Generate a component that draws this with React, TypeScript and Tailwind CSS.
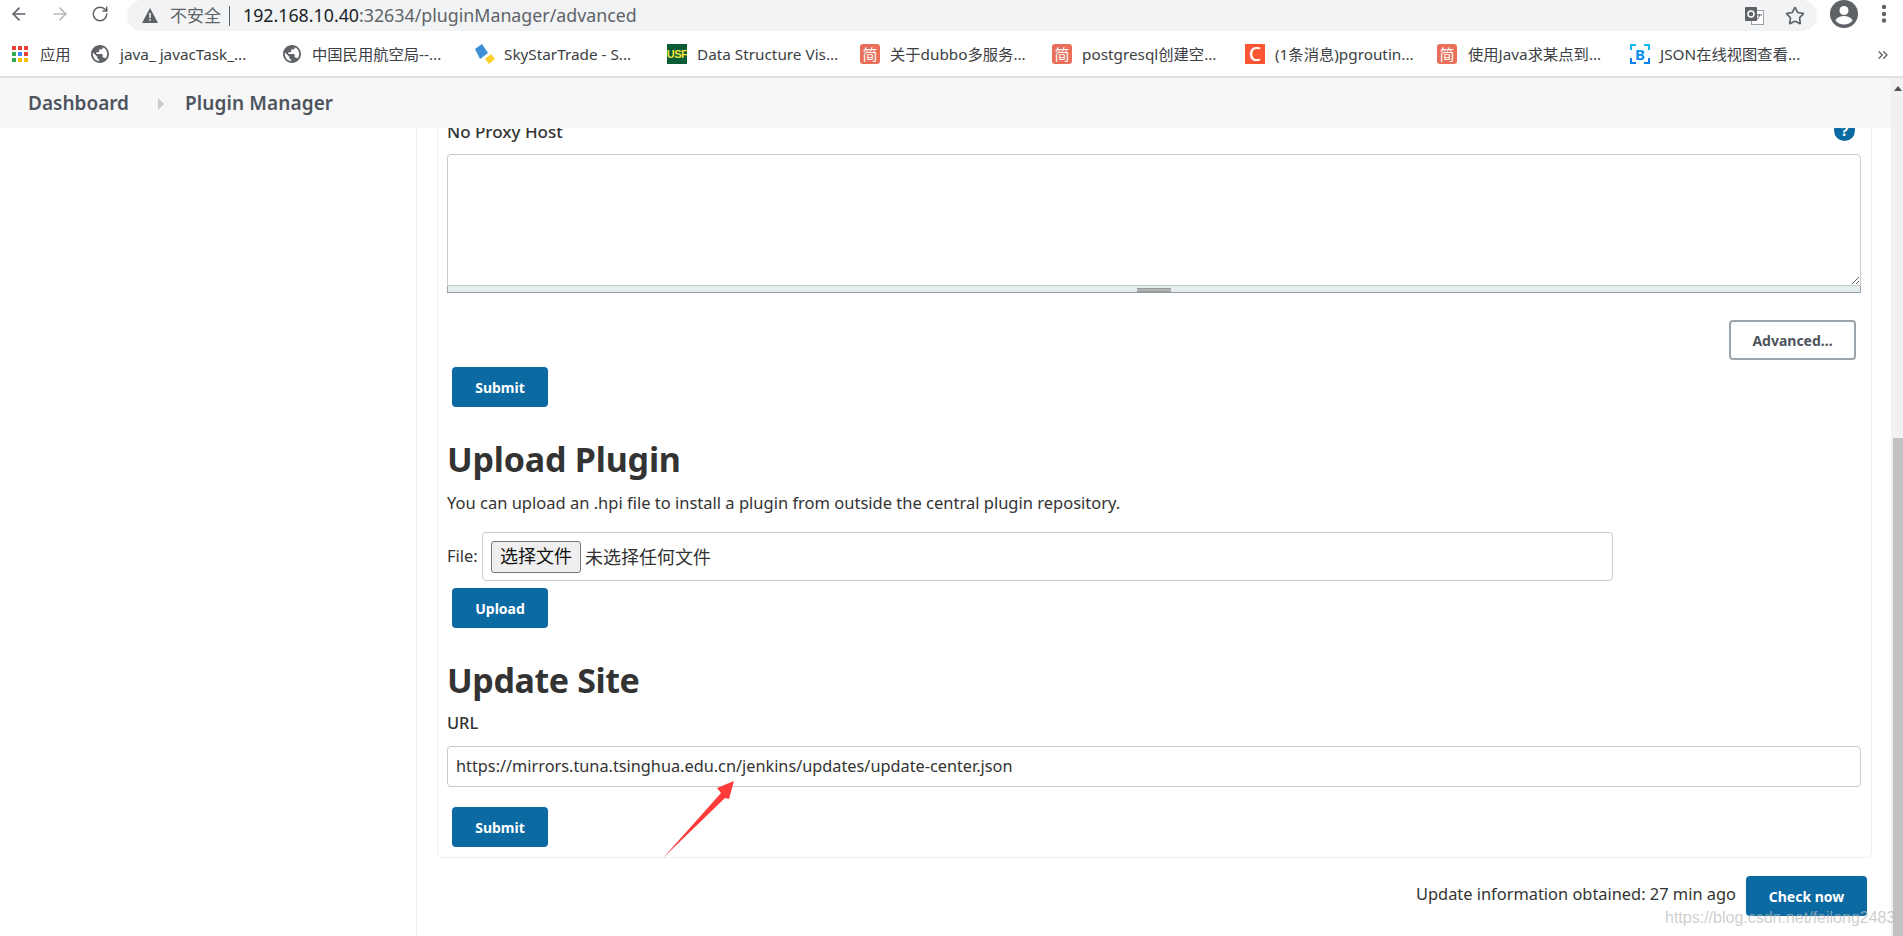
import React from "react";
import { ArrowLeft, ArrowRight, RotateCw, Star, ChevronsRight } from "lucide-react";

const FONT = "font-['Noto_Sans','Noto_Sans_CJK_SC',sans-serif]";

function Globe() {
  return (
    <svg width="18" height="18" viewBox="2 2 20 20" className="shrink-0">
      <path
        d="M12 2C6.48 2 2 6.48 2 12s4.48 10 10 10 10-4.48 10-10S17.52 2 12 2zm-1 17.93c-3.95-.49-7-3.85-7-7.93 0-.62.08-1.21.21-1.79L9 15v1c0 1.1.9 2 2 2v1.93zm6.9-2.54c-.26-.81-1-1.39-1.9-1.39h-1v-3c0-.55-.45-1-1-1H8v-2h2c.55 0 1-.45 1-1V7h2c1.1 0 2-.9 2-2v-.41c2.93 1.19 5 4.06 5 7.41 0 2.08-.8 3.97-2.1 5.39z"
        fill="#5f6368"
      />
    </svg>
  );
}

function Apps() {
  const colors = ["#ea4335", "#ea4335", "#ea4335", "#34a853", "#4285f4", "#ea4335", "#34a853", "#fbbc04", "#fbbc04"];
  return (
    <div className="grid w-[16px] shrink-0 grid-cols-3 gap-[2px]">
      {colors.map((c, i) => (
        <span key={i} className="h-1 w-1" style={{ background: c }} />
      ))}
    </div>
  );
}

function Jian() {
  return (
    <span className="flex h-5 w-5 shrink-0 items-center justify-center rounded-[3px] bg-[#ea6f5a] text-[15px] leading-none text-white">
      简
    </span>
  );
}

function Sky() {
  return (
    <svg width="21" height="21" viewBox="0 0 21 21" className="shrink-0">
      <path d="M0 5L7 0l6 9-8 6z" fill="#3f8fd8" />
      <path d="M10 15l6-5 4 5-6 5z" fill="#fbd02c" />
    </svg>
  );
}

function Usf() {
  return (
    <span className="flex h-5 w-5 shrink-0 items-center justify-center bg-[#0a5c36] font-['Liberation_Sans'] text-[11px] font-bold leading-none tracking-[-0.5px] text-[#f5e33c]">
      USF
    </span>
  );
}

function Csdn() {
  return (
    <span className="flex h-5 w-5 shrink-0 items-center justify-center bg-[#fc5531] text-[19px] font-medium leading-none text-white">
      C
    </span>
  );
}

function BJson() {
  return (
    <span className="relative flex h-5 w-5 shrink-0 items-center justify-center text-[15px] font-bold leading-none text-[#0a8ff0]">
      <svg width="20" height="20" viewBox="0 0 20 20" className="absolute inset-0">
        <path d="M6 1H1v5M14 1h5v5" fill="none" stroke="#12b5f5" strokeWidth="2" />
        <path d="M1 14v5h5M19 14v5h-5" fill="none" stroke="#0a7ff0" strokeWidth="2" />
      </svg>
      B
    </span>
  );
}

// left is the gap back to the previous bookmark
const bookmarks = [
  { icon: <Apps />, label: "应用", left: 12, gap: 12, width: 30 },
  { icon: <Globe />, label: "java_ javacTask_...", left: 21, gap: 11, width: 125 },
  { icon: <Globe />, label: "中国民用航空局--...", left: 38, gap: 11, width: 130 },
  { icon: <Sky />, label: "SkyStarTrade - S...", left: 33, gap: 8, width: 130 },
  { icon: <Usf />, label: "Data Structure Vis...", left: 33, gap: 10, width: 141 },
  { icon: <Jian />, label: "关于dubbo多服务...", left: 22, gap: 10, width: 134 },
  { icon: <Jian />, label: "postgresql创建空...", left: 28, gap: 10, width: 133 },
  { icon: <Csdn />, label: "(1条消息)pgroutin...", left: 30, gap: 10, width: 142 },
  { icon: <Jian />, label: "使用Java求某点到...", left: 20, gap: 11, width: 131 },
  { icon: <BJson />, label: "JSON在线视图查看...", left: 31, gap: 10, width: 140 },
];

function BlueButton({ label, className = "" }: { label: string; className?: string }) {
  return (
    <button className={`h-10 rounded bg-[#0b6aa2] text-[14px] font-bold text-white ${className}`}>{label}</button>
  );
}

export default function App() {
  return (
    <div className={`relative flex h-[936px] w-full flex-col overflow-hidden bg-white ${FONT}`}>
      {/* Browser toolbar */}
      <div className="flex h-[31px] shrink-0 items-start bg-white pl-[9px] text-[#5f6368]">
        <ArrowLeft size={20} strokeWidth={2} className="mt-[4px]" />
        <ArrowRight size={20} strokeWidth={2} className="ml-[21px] mt-[4px] text-[#b5b8bb]" />
        <RotateCw size={18} strokeWidth={2} className="ml-[21px] mt-[5px]" />
        <div className="ml-[18px] flex h-[31px] w-[1690px] items-center rounded-[16px] bg-[#f1f3f4] pl-[15px]">
          <svg width="16" height="15" viewBox="0 0 16 15" className="shrink-0">
            <path d="M8 0l8 15H0z" fill="#5f6368" />
            <path d="M7.200 5h1.600v5H7.200zM7.200 11h1.600v1.600H7.200z" fill="#f1f3f4" />
          </svg>
          <span className="ml-[12px] text-[17px] text-[#5f6368]">不安全</span>
          <span className="ml-[8px] h-[20px] w-px bg-[#5f6368]" />
          <span className="ml-[13px] whitespace-nowrap text-[17.8px] text-[#202124]">
            192.168.10.40<span className="text-[#5f6368]">:32634/pluginManager/advanced</span>
          </span>
          <div className="ml-auto flex items-center gap-[21px] pr-[12px]">
            <svg width="19" height="18" viewBox="0 0 19 18">
              <rect x="6.500" y="3.500" width="12" height="14" fill="#fff" stroke="#9aa0a6" />
              <rect x="0" y="0" width="12" height="14" rx="1" fill="#5f6368" />
              <circle cx="6" cy="7" r="3" fill="none" stroke="#fff" strokeWidth="1.500" />
              <path d="M12 8h5M14.500 7v1q-.5 3-3 5" fill="none" stroke="#5f6368" />
            </svg>
            <Star size={20} strokeWidth={2} />
          </div>
        </div>
        <svg width="28" height="28" viewBox="0 0 28 28" className="ml-[13px] shrink-0">
          <circle cx="14" cy="14" r="14" fill="#5f6368" />
          <circle cx="14" cy="10.500" r="4.500" fill="#fff" />
          <path d="M5.500 20.500c2-3.500 5-4.500 8.500-4.500s6.500 1 8.500 4.500c-2 2.500-5 4-8.500 4s-6.500-1.500-8.500-4z" fill="#fff" />
        </svg>
        <svg width="6" height="28" viewBox="0 0 6 28" className="ml-[23px] shrink-0">
          <circle cx="3" cy="7" r="2.200" fill="#5f6368" />
          <circle cx="3" cy="14" r="2.200" fill="#5f6368" />
          <circle cx="3" cy="20.500" r="2.200" fill="#5f6368" />
        </svg>
      </div>

      {/* Bookmarks */}
      <div className="relative flex h-[47px] shrink-0 items-center border-b-2 border-[#dfdfe6] bg-white pt-[1px] text-[15.3px] text-[#3c4043]">
        {bookmarks.map((b) => (
          <div key={b.label} className="flex shrink-0 items-center" style={{ marginLeft: b.left, gap: b.gap }}>
            {b.icon}
            <span className="whitespace-nowrap" style={{ width: b.width }}>
              {b.label}
            </span>
          </div>
        ))}
        <ChevronsRight size={16} strokeWidth={2} className="absolute left-[1875px] top-[16px] text-[#5f6368]" />
      </div>

      <div className="flex min-h-0 flex-1">
        <div className="flex min-w-0 flex-1 flex-col">
          {/* Breadcrumb */}
          <div className="flex h-[50px] shrink-0 items-center bg-[#f7f7f8] pl-[28px] pt-[1px] text-[19px] font-semibold text-[#4d545d]">
            <span>Dashboard</span>
            <svg width="7" height="12" viewBox="0 0 7 12" className="ml-[29px]">
              <path d="M0 0l6 6-6 6z" fill="#c9cccf" />
            </svg>
            <span className="ml-[20px] tracking-[0.1px]">Plugin Manager</span>
          </div>

          <div className="flex min-h-0 flex-1">
            <div className="w-[417px] shrink-0 border-r border-[#eeeeee]" />
            <div className="ml-[20px] flex min-w-0 flex-1 flex-col text-[#333333]">
              {/* Card, scrolled so that its top is cut off */}
              <div className="mr-[19px] flex h-[730px] flex-col rounded-b-md border-x border-b border-[#eeeeee] pl-[9px] pr-[10px]">
                <div className="flex h-[26px] shrink-0 items-start justify-between overflow-hidden">
                  <span className="-mt-[8px] text-[17px] font-medium leading-[24px] text-[#333333]">No Proxy Host</span>
                  <span className="-mt-[8px] mr-[6px] flex h-[21px] w-[21px] items-center justify-center rounded-full bg-[#0b6aa2] text-[15px] font-bold leading-none text-white">
                    ?
                  </span>
                </div>
                <textarea
                  readOnly
                  className="h-[132px] w-full shrink-0 rounded-t border border-[#c8cacc] bg-white outline-none"
                />
                <div className="relative h-[7px] shrink-0 border-x border-b border-x-[#9aa5ad] border-b-[#8fa0ab] bg-[#e6edf0]">
                  <span className="absolute left-[689px] top-[2px] h-[4px] w-[34px] border-y border-[#9b9b9b] bg-[#b5b5b5]" />
                </div>
                <div className="mt-[27px] flex shrink-0 justify-end pr-[5px]">
                  <button className="h-[40px] w-[127px] rounded border-2 border-[#9aa5ad] bg-white text-[14px] font-bold text-[#4d545d]">
                    Advanced...
                  </button>
                </div>
                <BlueButton label="Submit" className="ml-[5px] mt-[7px] w-[96px] shrink-0" />
                <h1 className="mt-[30px] text-[34px] font-bold leading-[44px] tracking-[-0.2px]">Upload Plugin</h1>
                <p className="mt-[10px] text-[16.5px] leading-[24px]">
                  You can upload an .hpi file to install a plugin from outside the central plugin repository.
                </p>
                <div className="mt-[17px] flex items-center">
                  <span className="w-[35px] text-[16.4px]">File:</span>
                  <div className="flex h-[49px] w-[1131px] items-center rounded border border-[#c8cacc] pl-[8px] text-[18px]">
                    <span className="flex h-[32px] w-[90px] items-center justify-center rounded-[3px] border border-[#767676] bg-[#efefef] text-[#111111]">
                      选择文件
                    </span>
                    <span className="ml-[4px] pt-[1px]">未选择任何文件</span>
                  </div>
                </div>
                <BlueButton label="Upload" className="ml-[5px] mt-[7px] w-[96px] shrink-0" />
                <h1 className="mt-[30px] text-[34px] font-bold leading-[44px] tracking-[-0.4px]">Update Site</h1>
                <label className="mt-[9px] text-[16.4px] font-medium leading-[24px]">URL</label>
                <div className="mt-[11px] flex h-[41px] shrink-0 items-center rounded border border-[#c8cacc] pl-[8px] text-[16.3px]">
                  https://mirrors.tuna.tsinghua.edu.cn/jenkins/updates/update-center.json
                </div>
                <BlueButton label="Submit" className="ml-[5px] mt-[20px] w-[96px] shrink-0" />
              </div>
              {/* Footer */}
              <div className="mr-[24px] mt-[18px] flex items-center justify-end">
                <span className="mb-[4px] text-[16.4px]">Update information obtained: 27 min ago</span>
                <BlueButton label="Check now" className="ml-[10px] w-[121px]" />
              </div>
            </div>
          </div>
        </div>

        {/* Page scrollbar */}
        <div className="flex w-[12px] shrink-0 flex-col bg-[#f1f1f1] pl-[2px]">
          <div className="flex h-[360px] shrink-0 justify-center pt-[8px]">
            <span className="h-0 w-0 border-x-[4px] border-b-[5px] border-x-transparent border-b-[#505050]" />
          </div>
          <div className="flex-1 bg-[#c1c1c1]" />
        </div>
      </div>

      {/* Screenshot annotation */}
      <svg width="80" height="84" viewBox="0 0 80 84" className="absolute left-[660px] top-[777px]">
        <path d="M3 81L61 16 57 11 74 4 69 22 65 21z" fill="#ff3b3b" />
      </svg>
      {/* Watermark */}
      <span className="absolute left-[1665px] top-[906px] whitespace-nowrap font-['Liberation_Sans'] text-[16px] leading-6 text-[#b9b9b9]/70">
        https://blog.csdn.net/feilong2483
      </span>
    </div>
  );
}
